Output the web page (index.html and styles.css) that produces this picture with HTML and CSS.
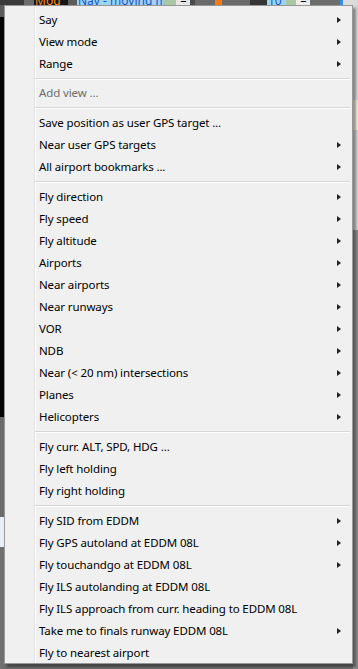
FILE: index.html
```html
<!DOCTYPE html>
<html>
<head>
<meta charset="utf-8">
<link rel="stylesheet" href="styles.css">
</head>
<body>
<div class="screen">
  <div class="topbar">
    <span class="c1"></span><span class="c2"></span><span class="c3">Mod</span><span class="c4"></span>
    <span class="c5">Nav - moving map</span><span class="c6"></span><span class="c7">–</span><span class="c8"></span>
    <span class="c9"></span><span class="c10"></span><span class="c11">10</span><span class="c12"></span>
    <span class="c13">–</span><span class="c14"></span><span class="c15"></span><span class="c16"></span>
  </div>
  <div class="below">
    <div class="leftstrip">
      <span class="l1"></span><span class="l2"></span><span class="l3"></span><span class="l4"></span><span class="l5"></span>
    </div>
    <div class="middle"></div>
    <div class="rightstrip">
      <span class="r1"></span><span class="r2"></span><span class="r3"></span><span class="r4"></span>
    </div>
  </div>

  <ul class="menu">
    <li class="item sub">Say</li>
    <li class="item sub">View mode</li>
    <li class="item sub">Range</li>
    <li class="sep tight"></li>
    <li class="item disabled">Add view ...</li>
    <li class="sep"></li>
    <li class="item">Save position as user GPS target ...</li>
    <li class="item sub">Near user GPS targets</li>
    <li class="item sub">All airport bookmarks ...</li>
    <li class="sep"></li>
    <li class="item sub">Fly direction</li>
    <li class="item sub">Fly speed</li>
    <li class="item sub">Fly altitude</li>
    <li class="item sub">Airports</li>
    <li class="item sub">Near airports</li>
    <li class="item sub">Near runways</li>
    <li class="item sub">VOR</li>
    <li class="item sub">NDB</li>
    <li class="item sub">Near (&lt; 20 nm) intersections</li>
    <li class="item sub">Planes</li>
    <li class="item sub">Helicopters</li>
    <li class="sep"></li>
    <li class="item">Fly curr. ALT, SPD, HDG ...</li>
    <li class="item">Fly left holding</li>
    <li class="item">Fly right holding</li>
    <li class="sep"></li>
    <li class="item sub">Fly SID from EDDM</li>
    <li class="item sub">Fly GPS autoland at EDDM 08L</li>
    <li class="item sub">Fly touchandgo at EDDM 08L</li>
    <li class="item">Fly ILS autolanding at EDDM 08L</li>
    <li class="item">Fly ILS approach from curr. heading to EDDM 08L</li>
    <li class="item sub">Take me to finals runway EDDM 08L</li>
    <li class="item">Fly to nearest airport</li>
  </ul>
</div>
</body>
</html>
```
FILE: styles.css
```css
* { box-sizing: border-box; }
html, body { margin: 0; padding: 0; }
body { width: 358px; height: 669px; overflow: hidden; background: #6b6b6b; font-family: "Noto Sans", "Open Sans", sans-serif; }

.screen { position: relative; width: 358px; height: 669px; overflow: hidden; display: flex; flex-direction: column; }

.topbar {
  display: grid;
  grid-template-columns: 24px 10px 34px 9px 86px 13px 14px 5px 55px 17px 19px 10px 14px 30px 3px 15px;
  height: 5px; overflow: hidden;
  font: 12px "Noto Sans", sans-serif;
}
.topbar span { display: block; height: 5px; overflow: hidden; white-space: nowrap; text-indent: 1px; line-height: 2px; }
.c1 { background: #3a3a3a; }
.c2 { background: #6d6d6d; }
.c3 { background: #161616; color: #ff8a1c; }
.c4 { background: #5c5c5c; }
.c5 { background: #9dd3f3; color: #1f4fd0; }
.c6 { background: #a9c7a4; }
.c7 { background: #e6e6e6; color: #000; text-align: center; }
.c8 { background: #4a4a4a; }
.c9 { background: linear-gradient(90deg, #6a6a6a 0 20px, #ff7a10 20px 27px, #6a6a6a 27px); }
.c10 { background: #353535; }
.c11 { background: #9dd3f3; color: #1f4fd0; }
.c12 { background: #a9c7a4; }
.c13 { background: #ececec; color: #000; text-align: center; }
.c14 { background: #6d6d6d; }
.c15 { background: #2f8ff0; }
.c16 { background: #dcdcdc; }

.below { flex: 1; display: flex; }
.leftstrip { width: 4px; display: flex; flex-direction: column; }
.l1 { height: 12px; background: #5a5a5a; }
.l2 { height: 400px; background: #050505; }
.l3 { height: 100px; background: #6b6b6b; }
.l4 { height: 30px; background: #e8eef6; }
.l5 { flex: 1; background: #707070; }
.middle { flex: 1; background: #6b6b6b; }
.rightstrip { width: 5px; display: flex; flex-direction: column; }
.r1 { height: 95px; background: #d4d4d4; }
.r2 { height: 30px; background: #ecebd6; }
.r3 { height: 100px; background: #d0d0d0; }
.r4 { flex: 1; background: #8a8a8a; }

.menu {
  position: absolute; left: 4px; top: 5px;
  width: 349px; height: 659px; overflow: hidden;
  margin: 0; padding: 3px 0 0 0; list-style: none;
  background:
    linear-gradient(90deg, transparent 29px, #e2e2e2 29px 30px, #ffffff 30px 31px, transparent 31px),
    #f0f0f0;
  border: 1px solid #979797;
  box-shadow: 3px 3px 2px rgba(0,0,0,0.35);
  font-size: 11.5px; letter-spacing: -0.12px; color: #000;
}
.item {
  position: relative;
  height: 22px; line-height: 22px;
  padding-left: 34px; padding-right: 20px;
  white-space: nowrap;
}
.item.disabled { color: #6d6d6d; }
.item.sub::after {
  content: ""; position: absolute; right: 11px; top: 8px;
  width: 0; height: 0;
  border-left: 4px solid #222;
  border-top: 3.5px solid transparent;
  border-bottom: 3.5px solid transparent;
}
.sep {
  height: 8px; margin-left: 30px; margin-right: 2px;
  background: linear-gradient(180deg, transparent 3px, #d7d7d7 3px 4px, #ffffff 4px 5px, transparent 5px);
}
.sep.tight { height: 7px; }
```
